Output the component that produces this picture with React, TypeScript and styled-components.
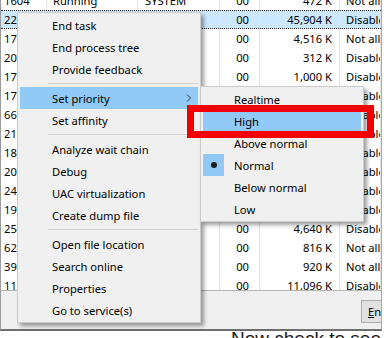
import React from "react";
import styled, { createGlobalStyle } from "styled-components";

const GlobalStyle = createGlobalStyle`
  html, body { margin: 0; padding: 0; background: #ffffff; overflow: hidden; }
  body { font-family: "Noto Sans", "Open Sans", sans-serif; }
  #root { width: 384px; height: 338px; }
`;

const Stage = styled.div`
  position: relative;
  width: 384px;
  height: 338px;
  overflow: hidden;
  background: #ffffff;
`;

const Window = styled.div`
  display: flex;
  flex-direction: column;
  width: 382px;
  height: 331px;
  box-sizing: border-box;
  border-left: 1px solid #9a9a9a;
  border-right: 1px solid #a8a8a8;
  border-bottom: 2px solid #6e6e6e;
  background: #f0f0f0;
  overflow: hidden;
`;

const TableArea = styled.div`
  height: 291px;
  flex-shrink: 0;
  box-sizing: border-box;
  background: #ffffff;
  border-bottom: 1px solid #b4b4b4;
  overflow: hidden;
`;

const Rows = styled.div`
  margin-top: -9px;
`;

const Row = styled.div<{ $selected?: boolean }>`
  display: grid;
  grid-template-columns: 46px 91px 82px 40px 80px 1fr;
  height: 19px;
  box-sizing: border-box;
  font-size: 11.2px;
  line-height: ${(p) => (p.$selected ? "17px" : "19px")};
  color: #000;
  background: ${(p) => (p.$selected ? "#cce8ff" : "transparent")};
  border-top: ${(p) => (p.$selected ? "1px dotted #2a2a2a" : "none")};
  border-bottom: ${(p) => (p.$selected ? "1px dotted #2a2a2a" : "none")};
`;

const Cell = styled.div<{ $align?: "left" | "right"; $pl?: number; $pr?: number }>`
  box-sizing: border-box;
  padding-left: ${(p) => p.$pl ?? 6}px;
  padding-right: ${(p) => p.$pr ?? 6}px;
  text-align: ${(p) => p.$align ?? "left"};
  white-space: nowrap;
  overflow: hidden;
  border-right: 1px solid #e4e4e4;
`;

const Footer = styled.div`
  flex: 1;
  display: flex;
  align-items: flex-start;
  padding-top: 9px;
  padding-left: 360px;
  overflow: hidden;
`;

const ActionButton = styled.div`
  flex-shrink: 0;
  width: 75px;
  height: 23px;
  box-sizing: border-box;
  border: 1px solid #adadad;
  background: #e1e1e1;
  font-size: 11.2px;
  line-height: 21px;
  padding-left: 6px;
  color: #000;
  u { text-decoration: underline; }
`;

const Caption = styled.div`
  padding-left: 231px;
  margin-top: -2px;
  font-family: "Liberation Sans", Arial, sans-serif;
  font-size: 19px;
  line-height: 19px;
  color: #1a1a1a;
  white-space: nowrap;
`;

const Menu = styled.div<{ $left: number; $top: number; $width: number }>`
  position: absolute;
  left: ${(p) => p.$left}px;
  top: ${(p) => p.$top}px;
  width: ${(p) => p.$width}px;
  box-sizing: border-box;
  padding: 1px 2px;
  background: #f0f0f0;
  border: 1px solid #cbcbcb;
  box-shadow: 3px 3px 4px rgba(0, 0, 0, 0.38);
`;

const Item = styled.div<{ $active?: boolean; $pl?: number }>`
  display: flex;
  align-items: center;
  height: 22px;
  padding-left: ${(p) => p.$pl ?? 32}px;
  font-size: 11.2px;
  color: #000;
  white-space: nowrap;
  background: ${(p) => (p.$active ? "#91c9f7" : "transparent")};
`;

const Separator = styled.div`
  height: 7px;
  display: flex;
  align-items: center;
  padding-left: 28px;
  &::after {
    content: "";
    flex: 1;
    height: 1px;
    background: #d2d2d2;
  }
`;

const Chevron = styled.svg`
  margin-left: auto;
  margin-right: 6px;
  width: 6px;
  height: 8px;
`;

const CheckSlot = styled.span<{ $checked?: boolean }>`
  width: 21px;
  height: 22px;
  margin-right: 10px;
  display: flex;
  align-items: center;
  justify-content: center;
  background: ${(p) => (p.$checked ? "#90c8f6" : "transparent")};
  &::after {
    content: "";
    display: ${(p) => (p.$checked ? "block" : "none")};
    width: 6px;
    height: 6px;
    border-radius: 50%;
    background: #1a1a1a;
  }
`;

const RedBox = styled.div`
  position: absolute;
  left: 187px;
  top: 105px;
  width: 187px;
  height: 33px;
  box-sizing: border-box;
  border: 7px solid #f20000;
`;

type RowData = {
  pid: string;
  status: string;
  user: string;
  cpu: string;
  mem: string;
  uac: string;
  selected?: boolean;
};

const rows: RowData[] = [
  { pid: "1604", status: "Running", user: "SYSTEM", cpu: "00", mem: "472 K", uac: "Not allowed" },
  { pid: "2204", status: "Running", user: "user", cpu: "00", mem: "45,904 K", uac: "Disabled", selected: true },
  { pid: "1736", status: "Running", user: "", cpu: "00", mem: "4,516 K", uac: "Not allowed" },
  { pid: "2072", status: "Running", user: "user", cpu: "00", mem: "312 K", uac: "Disabled" },
  { pid: "1712", status: "Running", user: "user", cpu: "00", mem: "1,000 K", uac: "Disabled" },
  { pid: "1752", status: "Running", user: "user", cpu: "00", mem: "2,140 K", uac: "Disabled" },
  { pid: "6616", status: "Running", user: "user", cpu: "00", mem: "8,212 K", uac: "Disabled" },
  { pid: "2104", status: "Running", user: "user", cpu: "00", mem: "3,324 K", uac: "Disabled" },
  { pid: "1848", status: "Running", user: "user", cpu: "00", mem: "1,256 K", uac: "Disabled" },
  { pid: "2076", status: "Running", user: "user", cpu: "00", mem: "6,880 K", uac: "Disabled" },
  { pid: "2440", status: "Running", user: "user", cpu: "00", mem: "2,004 K", uac: "Disabled" },
  { pid: "1916", status: "Running", user: "user", cpu: "00", mem: "1,532 K", uac: "Disabled" },
  { pid: "2544", status: "Running", user: "user", cpu: "00", mem: "4,640 K", uac: "Disabled" },
  { pid: "6248", status: "Running", user: "user", cpu: "00", mem: "816 K", uac: "Not allowed" },
  { pid: "3940", status: "Running", user: "user", cpu: "00", mem: "920 K", uac: "Not allowed" },
  { pid: "1124", status: "Running", user: "user", cpu: "00", mem: "11,096 K", uac: "Disabled" },
];

type MenuEntry = { label?: string; sep?: boolean; active?: boolean; sub?: boolean };

const mainMenu: MenuEntry[] = [
  { label: "End task" },
  { label: "End process tree" },
  { label: "Provide feedback" },
  { sep: true },
  { label: "Set priority", active: true, sub: true },
  { label: "Set affinity" },
  { sep: true },
  { label: "Analyze wait chain" },
  { label: "Debug" },
  { label: "UAC virtualization" },
  { label: "Create dump file" },
  { sep: true },
  { label: "Open file location" },
  { label: "Search online" },
  { label: "Properties" },
  { label: "Go to service(s)" },
];

const priorities = [
  { label: "Realtime" },
  { label: "High", active: true },
  { label: "Above normal" },
  { label: "Normal", checked: true },
  { label: "Below normal" },
  { label: "Low" },
];

export default function App() {
  return (
    <Stage>
      <GlobalStyle />
      <Window>
        <TableArea>
          <Rows>
            {rows.map((r) => (
              <Row key={r.pid} $selected={r.selected}>
                <Cell $pl={3}>{r.pid}</Cell>
                <Cell>{r.status}</Cell>
                <Cell $pl={7}>{r.user}</Cell>
                <Cell $align="right" $pr={10}>{r.cpu}</Cell>
                <Cell $align="right" $pr={7}>{r.mem}</Cell>
                <Cell $pl={6}>{r.uac}</Cell>
              </Row>
            ))}
          </Rows>
        </TableArea>
        <Footer>
          <ActionButton>
            <u>E</u>nd task
          </ActionButton>
        </Footer>
      </Window>
      <Caption>Now check to see if it</Caption>

      <Menu $left={17} $top={12} $width={184}>
        {mainMenu.map((m, i) =>
          m.sep ? (
            <Separator key={i} />
          ) : (
            <Item key={i} $active={m.active}>
              {m.label}
              {m.sub && (
                <Chevron viewBox="0 0 6 8">
                  <path d="M1 0.5 L4.5 4 L1 7.5" fill="none" stroke="#333" strokeWidth="1" />
                </Chevron>
              )}
            </Item>
          )
        )}
      </Menu>

      <Menu $left={200} $top={86} $width={164}>
        {priorities.map((p) => (
          <Item key={p.label} $active={p.active} $pl={0}>
            <CheckSlot $checked={p.checked} />
            {p.label}
          </Item>
        ))}
      </Menu>

      <RedBox />
    </Stage>
  );
}
